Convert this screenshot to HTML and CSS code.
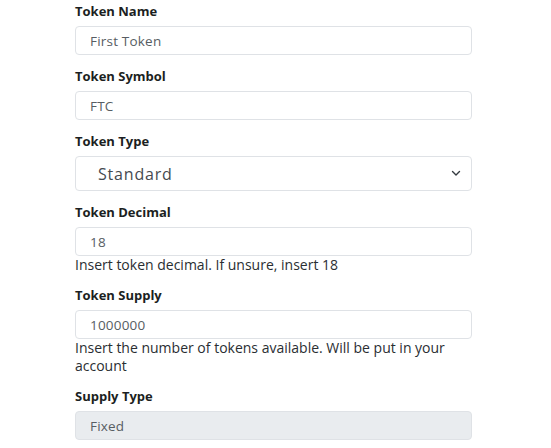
FILE: index.html
```html
<!DOCTYPE html>
<html>
<head>
<meta charset="utf-8">
<link rel="stylesheet" href="styles.css">
</head>
<body>
<form class="form">
  <div class="group">
    <label class="label">Token Name</label>
    <div class="field">First Token</div>
  </div>
  <div class="group">
    <label class="label">Token Symbol</label>
    <div class="field">FTC</div>
  </div>
  <div class="group">
    <label class="label">Token Type</label>
    <div class="field select">
      <span>Standard</span>
      <svg class="chev" width="10" height="7" viewBox="0 0 10 7"><path d="M1.5 1.5 L5 5 L8.5 1.5" fill="none" stroke="#343a40" stroke-width="1.4" stroke-linecap="round" stroke-linejoin="round"/></svg>
    </div>
  </div>
  <div class="group">
    <label class="label">Token Decimal</label>
    <div class="field">18</div>
    <div class="help">Insert token decimal. If unsure, insert 18</div>
  </div>
  <div class="group">
    <label class="label">Token Supply</label>
    <div class="field">1000000</div>
    <div class="help">Insert the number of tokens available. Will be put in your account</div>
  </div>
  <div class="group">
    <label class="label">Supply Type</label>
    <div class="field disabled">Fixed</div>
  </div>
</form>
</body>
</html>
```
FILE: styles.css
```css
html, body {
  margin: 0;
  padding: 0;
  background: #ffffff;
}
body {
  font-family: "Open Sans", "Lato", sans-serif;
  color: #212529;
}
.form {
  width: 397px;
  margin-left: 75px;
  padding-top: 2px;
  display: flex;
  flex-direction: column;
  gap: 12px;
}
.group {
  display: flex;
  flex-direction: column;
}
.label {
  font-size: 13px;
  font-weight: 700;
  line-height: 19px;
  margin-bottom: 5px;
  color: #1c1f22;
}
.field {
  box-sizing: border-box;
  height: 29px;
  border: 1px solid #dfe2e6;
  border-radius: 4px;
  padding: 0 14px;
  display: flex;
  align-items: center;
  font-size: 13.5px;
  letter-spacing: 0.2px;
  color: #575d63;
  background: #fff;
}
.select {
  height: 35px;
  padding: 0 10px 0 22px;
  font-size: 16px;
  letter-spacing: 0.8px;
  justify-content: space-between;
  color: #454a4f;
}
.disabled {
  background: #e9ecef;
}
.help {
  font-size: 14px;
  line-height: 18px;
  color: #2a2e32;
}
```
